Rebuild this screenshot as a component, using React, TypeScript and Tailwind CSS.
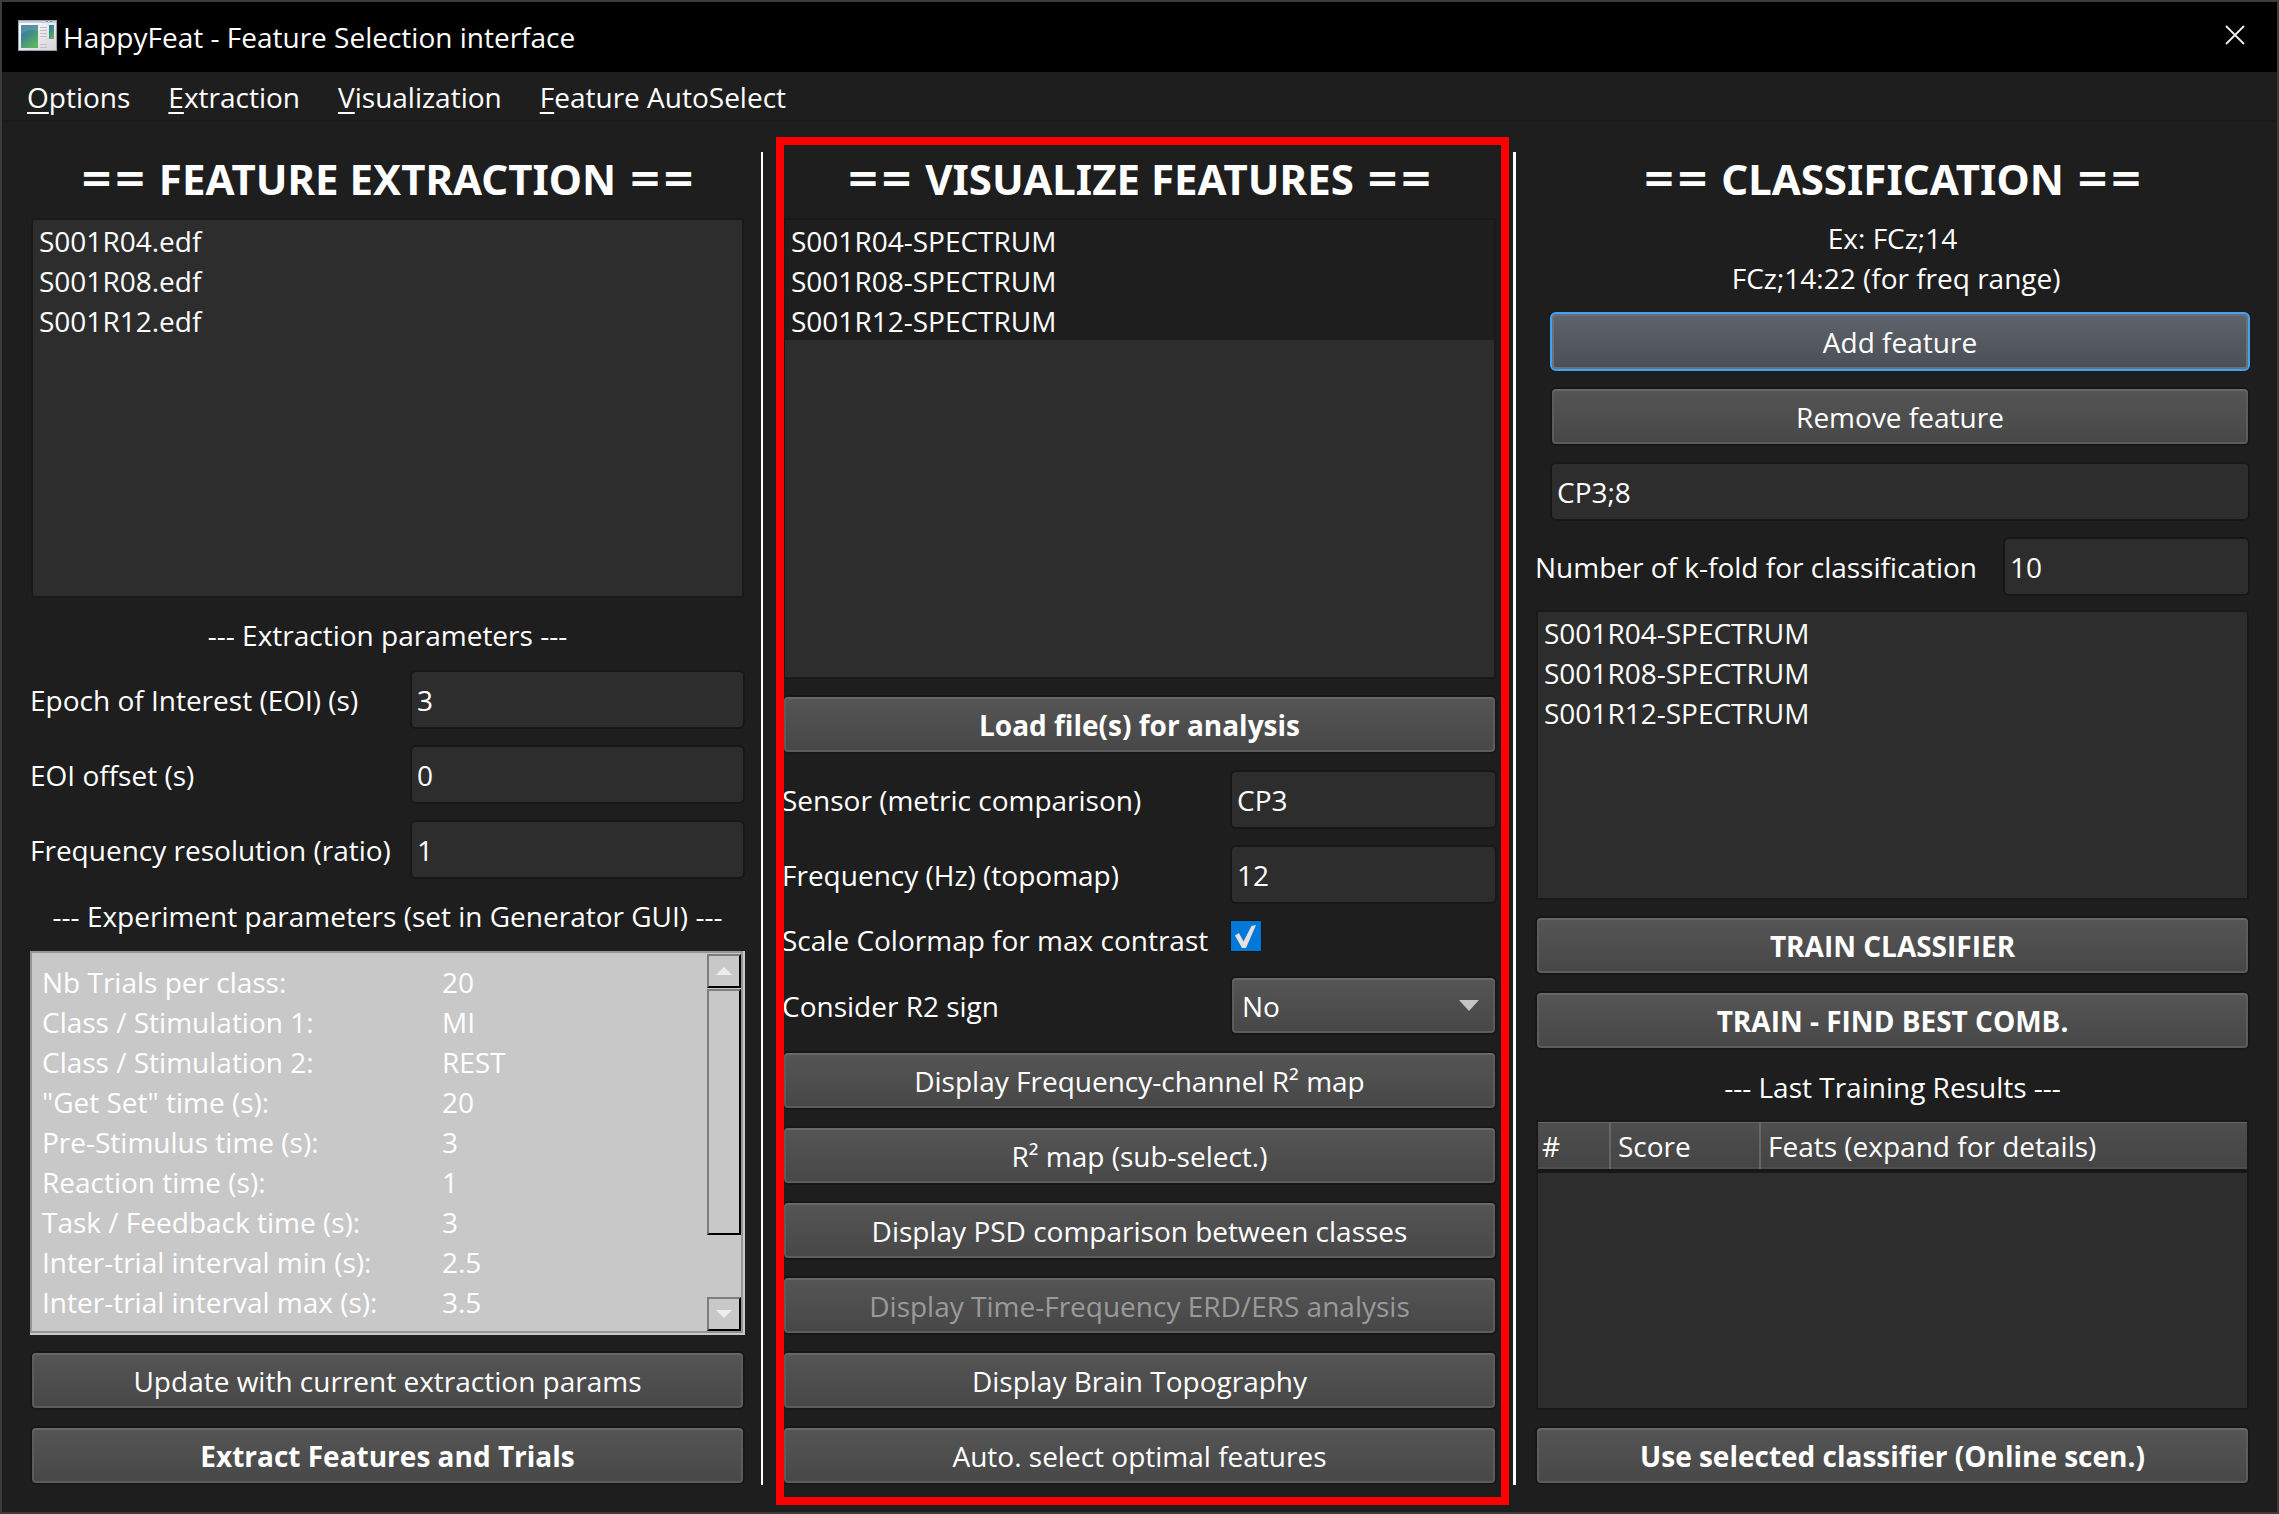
import { useState, type ReactNode } from "react";

const recordings = ["S001R04", "S001R08", "S001R12"];

const experiment: [string, string][] = [
  ["Nb Trials per class:", "20"],
  ["Class / Stimulation 1:", "MI"],
  ["Class / Stimulation 2:", "REST"],
  ['"Get Set" time (s):', "20"],
  ["Pre-Stimulus time (s):", "3"],
  ["Reaction time (s):", "1"],
  ["Task / Feedback time (s):", "3"],
  ["Inter-trial interval min (s):", "2.5"],
  ["Inter-trial interval max (s):", "3.5"],
];

function Button({ children, bold, disabled, focused }: { children: ReactNode; bold?: boolean; disabled?: boolean; focused?: boolean }) {
  return (
    <button
      type="button"
      disabled={disabled}
      className={
        "flex h-[59px] w-full shrink-0 items-center justify-center rounded-md border-2 bg-linear-to-b " +
        (focused
          ? "border-[#3fa4f5] from-[#5e646b] to-[#4b4f57] shadow-[inset_0_0_0_2px_#6b7078] "
          : "border-[#171717] from-[#555555] to-[#474747] shadow-[inset_0_2px_0_#686868,inset_0_0_0_2px_#5c5c5c] ") +
        (bold ? "font-bold " : "") +
        (disabled ? "text-[#9a9a9a]" : "text-white")
      }
    >
      {children}
    </button>
  );
}

function TextBox({ id, value, label }: { id: string; value: string; label?: string }) {
  return (
    <input
      id={id}
      aria-label={label}
      defaultValue={value}
      className="h-[59px] w-full min-w-0 rounded-md border-2 border-[#171717] bg-[#2d2d2d] px-[5px] text-white outline-none"
    />
  );
}

function Title({ children }: { children: ReactNode }) {
  return (
    <h2 className="flex h-[52px] shrink-0 items-center justify-center gap-3 whitespace-nowrap text-[42px] font-bold">
      <span className="font-['DejaVu_Sans'] text-[40px]">==</span>
      <span className="font-['Noto_Sans']">{children}</span>
      <span className="font-['DejaVu_Sans'] text-[40px]">==</span>
    </h2>
  );
}

function FileList({ items, selected }: { items: string[]; selected?: boolean }) {
  return (
    <ul className="mx-px -mt-0.5 min-h-[140px] flex-1 border-2 border-[#191919] bg-[#2d2d2d]">
      {items.map((item) => (
        <li key={item} className={selected ? "h-10 bg-[#1e1e1e] px-1.5 leading-[42px]" : "h-10 px-1.5 leading-[42px]"}>
          {item}
        </li>
      ))}
    </ul>
  );
}

function Caption({ children }: { children: ReactNode }) {
  return <p className="h-10 shrink-0 whitespace-nowrap text-center leading-[42px]">{children}</p>;
}

function AppIcon() {
  return (
    <svg width="39" height="31" viewBox="0 0 39 31" aria-hidden="true">
      <defs>
        <linearGradient id="pane" x1="0" y1="0" x2="0.6" y2="1">
          <stop offset="0" stopColor="#3f76a3" />
          <stop offset="0.5" stopColor="#3d8c8c" />
          <stop offset="1" stopColor="#5cb25c" />
        </linearGradient>
        <linearGradient id="sheet" x1="0" y1="0" x2="1" y2="1">
          <stop offset="0" stopColor="#ffffff" />
          <stop offset="1" stopColor="#d4d4da" />
        </linearGradient>
      </defs>
      <rect width="39" height="31" fill="#9c9fb0" />
      <rect x="1" y="3" width="37" height="27" fill="url(#sheet)" />
      <rect x="1" y="1" width="37" height="2" fill="#c9cde0" />
      <rect x="28" y="1" width="2" height="1" fill="#7f86a0" />
      <rect x="32" y="1" width="2" height="1" fill="#7f86a0" />
      <rect x="3" y="5" width="17" height="23" fill="url(#pane)" />
      <path d="M3 14C8 10 14 9 20 11V5H3Z" fill="#ffffff" opacity="0.12" />
      <rect x="31" y="5" width="5" height="14" fill="url(#pane)" />
      <path d="M22 7.500H29M22 10.500H29M22 13.500H29M22 16.500H29M22 24.500H29M22 27.500H29" stroke="#bfc1c6" />
    </svg>
  );
}

const menus = [
  ["O", "ptions"],
  ["E", "xtraction"],
  ["V", "isualization"],
  ["F", "eature AutoSelect"],
];

const bevel =
  "border-2 border-t-[#7d7d7d] border-l-[#7d7d7d] border-r-black border-b-black bg-[#c8c8c8]";

export default function App() {
  const [scaled, setScaled] = useState(true);
  return (
    <div className="flex min-h-screen flex-col border-2 border-[#3c3c3c] bg-[#1e1e1e] font-['Open_Sans',sans-serif] text-[28px] text-white">
      <header className="flex h-[70px] shrink-0 items-center bg-black pr-8 pb-1 pl-4">
        <AppIcon />
        <h1 className="ml-1.5 flex-1 pt-1">HappyFeat - Feature Selection interface</h1>
        <button type="button" aria-label="Close">
          <svg width="20" height="20" viewBox="0 0 20 20" fill="none" stroke="#f0f0f0" strokeWidth="1.800">
            <path d="M1 1L19 19M19 1L1 19" />
          </svg>
        </button>
      </header>

      <nav className="flex h-[50px] shrink-0 items-center gap-[38px] border-b-2 border-[#1a1a1a] pt-0.5 pl-[25px]">
        {menus.map(([key, rest]) => (
          <button key={rest} type="button">
            <span className="underline decoration-2 underline-offset-4">{key}</span>
            {rest}
          </button>
        ))}
      </nav>

      <main className="grid flex-1 grid-cols-[minmax(0,1fr)_auto_minmax(0,1fr)_auto_minmax(0,1fr)] pt-[30px] pr-[27px] pb-[27px] pl-7">
        <section className="flex flex-col gap-4">
          <Title>FEATURE EXTRACTION</Title>
          <FileList items={recordings.map((r) => r + ".edf")} />
          <Caption>--- Extraction parameters ---</Caption>
          <div className="grid grid-cols-[380px_minmax(0,1fr)] items-center gap-y-4">
            <label htmlFor="epoch">Epoch of Interest (EOI) (s)</label>
            <TextBox id="epoch" value="3" />
            <label htmlFor="offset">EOI offset (s)</label>
            <TextBox id="offset" value="0" />
            <label htmlFor="resolution">Frequency resolution (ratio)</label>
            <TextBox id="resolution" value="1" />
          </div>
          <Caption>--- Experiment parameters (set in Generator GUI) ---</Caption>
          <div className="border-r-2 border-b-2 border-[#c8c8c8]">
            <div className="flex h-[382px] border-2 border-[#959595] bg-[#c8c8c8]">
              <table className="mt-[9px] ml-[10px] self-start">
                <tbody>
                  {experiment.map(([name, value]) => (
                    <tr key={name} className="h-10">
                      <th scope="row" className="w-[400px] p-0 text-left leading-10 font-normal">
                        {name}
                      </th>
                      <td className="p-0 leading-10">{value}</td>
                    </tr>
                  ))}
                </tbody>
              </table>
              <div className="ml-auto flex w-[34px] flex-col pt-px">
                <button type="button" aria-label="Scroll up" className={"flex h-[34px] shrink-0 items-center justify-center " + bevel}>
                  <svg width="16" height="8" viewBox="0 0 16 8" fill="#eeeeee">
                    <path d="M8 0L16 8H0Z" />
                  </svg>
                </button>
                <div className={"mt-px h-[246px] " + bevel} />
                <button type="button" aria-label="Scroll down" className={"mt-auto flex h-[34px] shrink-0 items-center justify-center " + bevel}>
                  <svg width="16" height="8" viewBox="0 0 16 8" fill="#eeeeee">
                    <path d="M0 0H16L8 8Z" />
                  </svg>
                </button>
              </div>
            </div>
          </div>
          <Button>Update with current extraction params</Button>
          <Button bold>Extract Features and Trials</Button>
        </section>

        <div className="mr-[19px] ml-4 w-0.5 bg-white" />

        <section className="relative flex flex-col gap-4">
          <Title>VISUALIZE FEATURES</Title>
          <FileList items={recordings.map((r) => r + "-SPECTRUM")} selected />
          <Button bold>Load file(s) for analysis</Button>
          <div className="grid grid-cols-[448px_minmax(0,1fr)] items-center gap-y-4">
            <label htmlFor="sensor">Sensor (metric comparison)</label>
            <TextBox id="sensor" value="CP3" />
            <label htmlFor="frequency">Frequency (Hz) (topomap)</label>
            <TextBox id="frequency" value="12" />
            <label htmlFor="scale" className="leading-10">
              Scale Colormap for max contrast
            </label>
            <span className="grid size-8 place-items-center self-start">
              <input
                id="scale"
                type="checkbox"
                checked={scaled}
                onChange={(e) => setScaled(e.target.checked)}
                className="col-start-1 row-start-1 size-8 appearance-none border border-[#151515] bg-[#2d2d2d] checked:bg-[#0078d7]"
              />
              {scaled && (
                <svg width="30" height="30" viewBox="0 0 30 30" className="pointer-events-none col-start-1 row-start-1" fill="#e2e2e2">
                  <path d="M4 14.500L8 12L12.500 20.500L20.500 5L25 4L15 27H11Z" />
                </svg>
              )}
            </span>
            <label htmlFor="sign">Consider R2 sign</label>
            <span className="grid items-center">
              <select
                id="sign"
                defaultValue="No"
                className="col-start-1 row-start-1 h-[59px] w-full appearance-none rounded-md border-2 border-[#171717] bg-linear-to-b from-[#555555] to-[#474747] px-2.5 text-white shadow-[inset_0_2px_0_#686868,inset_0_0_0_2px_#5c5c5c]"
              >
                <option>No</option>
                <option>Yes</option>
              </select>
              <svg width="20" height="11" viewBox="0 0 20 11" fill="#c4c4c4" className="pointer-events-none col-start-1 row-start-1 mr-[18px] justify-self-end">
                <path d="M0 0H20L10 11Z" />
              </svg>
            </span>
          </div>
          <Button>Display Frequency-channel R² map</Button>
          <Button>R² map (sub-select.)</Button>
          <Button>Display PSD comparison between classes</Button>
          <Button disabled>Display Time-Frequency ERD/ERS analysis</Button>
          <Button>Display Brain Topography</Button>
          <Button>Auto. select optimal features</Button>
          <div className="pointer-events-none absolute -top-[15px] -right-3 -bottom-5 -left-1.5 border-8 border-[#ff0000]" />
        </section>

        <div className="mr-[19px] ml-4 w-[3px] bg-white" />

        <section className="flex flex-col gap-4">
          <Title>CLASSIFICATION</Title>
          <p className="-mt-0.5 text-center leading-[40px]">
            Ex: FCz;14
            <br />
            &nbsp;FCz;14:22 (for freq range)
          </p>
          <div className="-mt-0.5 flex flex-col gap-4 pl-[15px]">
            <Button focused>Add feature</Button>
            <Button>Remove feature</Button>
            <TextBox id="feature" value="CP3;8" label="Feature" />
          </div>
          <div className="grid grid-cols-[468px_minmax(0,1fr)] items-center">
            <label htmlFor="kfold">Number of k-fold for classification</label>
            <TextBox id="kfold" value="10" />
          </div>
          <FileList items={recordings.map((r) => r + "-SPECTRUM")} />
          <Button bold>TRAIN CLASSIFIER</Button>
          <Button bold>TRAIN - FIND BEST COMB.</Button>
          <Caption>--- Last Training Results ---</Caption>
          <div className="mx-px -mt-0.5 min-h-[140px] flex-1 border-2 border-[#191919] bg-[#2d2d2d]">
            <table className="w-full table-fixed border-b border-[#4a4a4a]">
              <thead>
                <tr className="h-12 border-b-4 border-[#171717] bg-linear-to-b from-[#4e4e4e] to-[#454545] text-left">
                  <th scope="col" className="w-[72px] border-t border-r-2 border-[#666666] px-1 font-normal leading-10">#</th>
                  <th scope="col" className="w-[150px] border-t border-r-2 border-[#666666] px-[7px] font-normal leading-10">Score</th>
                  <th scope="col" className="border-t border-[#666666] px-[7px] font-normal leading-10">Feats (expand for details)</th>
                </tr>
              </thead>
            </table>
          </div>
          <Button bold>Use selected classifier (Online scen.)</Button>
        </section>
      </main>
    </div>
  );
}
